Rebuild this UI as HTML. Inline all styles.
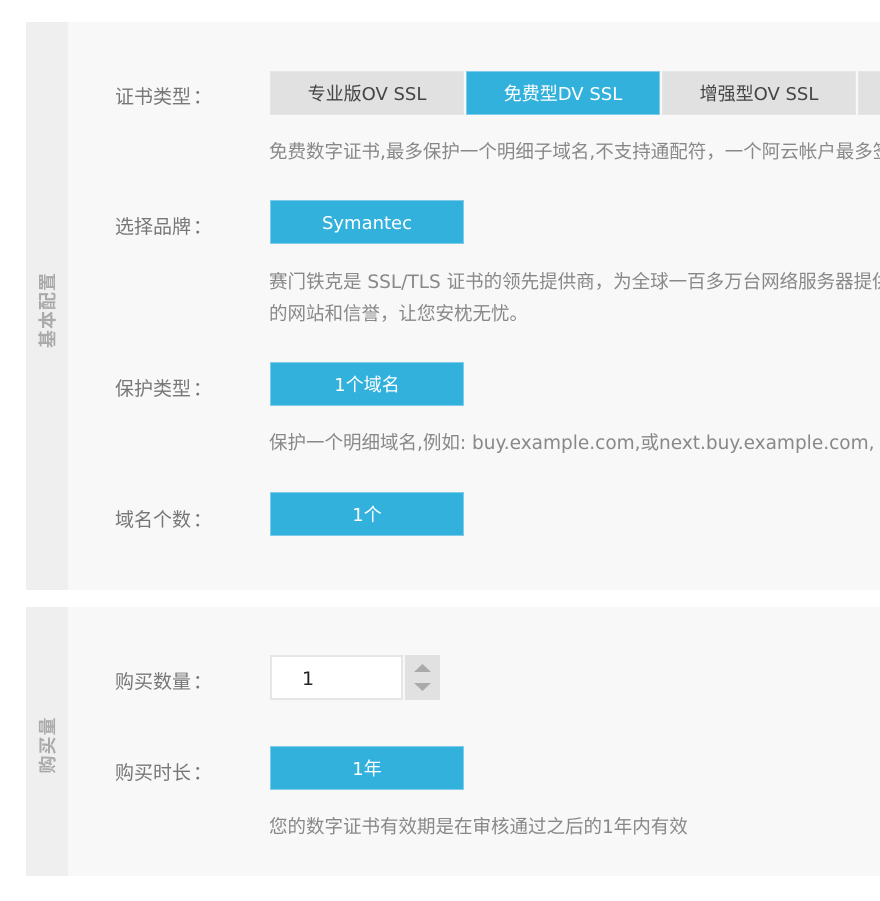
<!DOCTYPE html>
<html><head><meta charset="utf-8"><style>
html,body{margin:0;padding:0;width:880px;height:901px;overflow:hidden;background:#fff;}
body{font-family:"DejaVu Sans","Noto Sans CJK SC",sans-serif;position:relative;}
.panel{position:absolute;left:26px;width:854px;background:#f8f8f8;overflow:hidden;}
.side{position:absolute;left:0;top:0;bottom:0;width:42px;background:#efefef;}
.vt{position:absolute;left:21px;transform:translate(-50%,-50%) rotate(-90deg);white-space:nowrap;font-size:18px;font-weight:bold;color:#aaa;letter-spacing:1px;}
.lbl{position:absolute;left:115px;font-size:19px;color:#777;line-height:24px;white-space:nowrap;}
.lbl i{font-style:normal;font-family:"Noto Sans CJK SC",sans-serif;margin-left:2px;}
.btn{position:absolute;width:192px;height:42px;border:1px solid #e6e6e6;background:#e1e1e1;color:#444;font-size:18px;line-height:46px;text-align:center;white-space:nowrap;overflow:hidden;}
.btn.on{background:#33b1dd;color:#fff;border-color:#7fcbea;}
.desc{position:absolute;left:269px;font-size:18.5px;color:#888;white-space:nowrap;line-height:32px;}
.clip{position:absolute;left:0;top:0;width:880px;height:901px;overflow:hidden;}
</style></head><body><div class="clip">
<div class="panel" style="top:22px;height:568px;"><div class="side"></div><div class="vt" style="top:288px;">基本配置</div></div>
<div class="panel" style="top:607px;height:269px;"><div class="side"></div><div class="vt" style="top:138px;">购买量</div></div>

<div class="lbl" style="top:84px;">证书类型<i>：</i></div>
<div class="btn" style="left:270px;top:71px;">专业版OV SSL</div>
<div class="btn on" style="left:466px;top:71px;">免费型DV SSL</div>
<div class="btn" style="left:662px;top:71px;">增强型OV SSL</div>
<div class="btn" style="left:858px;top:71px;">通配符</div>
<div class="desc" style="top:137px;">免费数字证书,最多保护一个明细子域名,不支持通配符，一个阿云帐户最多签发</div>

<div class="lbl" style="top:214px;">选择品牌<i>：</i></div>
<div class="btn on" style="left:270px;top:200px;">Symantec</div>
<div class="desc" style="top:267px;">赛门铁克是 SSL/TLS 证书的领先提供商，为全球一百多万台网络服务器提供</div>
<div class="desc" style="top:299px;">的网站和信誉，让您安枕无忧。</div>

<div class="lbl" style="top:376px;">保护类型<i>：</i></div>
<div class="btn on" style="left:270px;top:362px;">1个域名</div>
<div class="desc" style="top:428px;">保护一个明细域名,例如: buy.example.com,或next.buy.example.com, 等</div>

<div class="lbl" style="top:507px;">域名个数<i>：</i></div>
<div class="btn on" style="left:270px;top:492px;">1个</div>

<div class="lbl" style="top:669px;">购买数量<i>：</i></div>
<div style="position:absolute;left:270px;top:655px;height:41px;border:2px solid #e6e6e6;background:#fff;font-size:19px;color:#222;line-height:45px;padding-left:30px;width:99px;">1</div>
<div style="position:absolute;left:405px;top:655px;width:35px;height:45px;background:#e1e1e1;">
<svg width="35" height="45" style="position:absolute;left:0;top:0"><polygon points="9,17 26,17 17.5,9" fill="#aaa"/><polygon points="9,28 26,28 17.5,36" fill="#aaa"/></svg></div>

<div class="lbl" style="top:760px;">购买时长<i>：</i></div>
<div class="btn on" style="left:270px;top:746px;">1年</div>
<div class="desc" style="top:812px;">您的数字证书有效期是在审核通过之后的1年内有效</div>
</div></body></html>
